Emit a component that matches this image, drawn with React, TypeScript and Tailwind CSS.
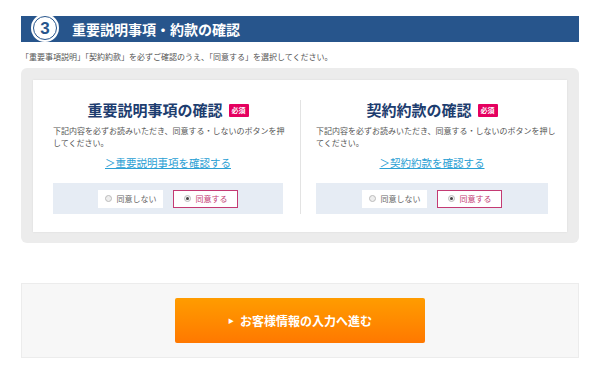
const agreeItems = [
  {
    id: "juyo",
    title: "重要説明事項の確認",
    link: "＞重要説明事項を確認する",
  },
  {
    id: "yakkan",
    title: "契約約款の確認",
    link: "＞契約約款を確認する",
  },
];

function AgreePanel({ title, link, first }: { title: string; link: string; first: boolean }) {
  return (
    <div className={first ? "pl-[20px] pr-[17px]" : "border-l border-[#e3e3e3] pl-[15px] pr-[19px]"}>
      <div className="flex items-center justify-center gap-[6px]">
        <h3 className="text-[15px] font-bold leading-[20px] text-[#1d3d6f]">{title}</h3>
        <span className="flex h-[13px] items-center rounded-[1px] bg-[#e5005f] px-[3px] text-[7px] font-bold leading-none text-white">
          必須
        </span>
      </div>
      <p className="mr-[-8px] mt-[5px] text-[8px] leading-[12px] text-[#555]">
        下記内容を必ずお読みいただき、同意する・しないのボタンを押してください。
      </p>
      <div className="mt-[7px] text-center text-[10.5px] leading-[14px]">
        <a className="text-[#2aa0d4] underline">{link}</a>
      </div>
      <div className="mt-[13px] flex h-[31px] items-center justify-center gap-[10px] bg-[#e6ecf4] text-[8px] leading-none">
        <div className="flex h-[18px] w-[65px] items-center justify-center gap-[5px] bg-white text-[#666]">
          <span className="h-[7px] w-[7px] rounded-full border border-[#bbb] bg-[#eee]" />
          同意しない
        </div>
        <div className="flex h-[18px] w-[65px] items-center justify-center gap-[5px] border border-[#c43a73] bg-white text-[#c43a73]">
          <span className="flex h-[7px] w-[7px] items-center justify-center rounded-full border border-[#bbb] bg-[#f3f3f3]">
            <span className="h-[3px] w-[3px] rounded-full bg-[#444]" />
          </span>
          同意する
        </div>
      </div>
    </div>
  );
}

export default function App() {
  return (
    <div
      className="h-[380px] w-[600px] bg-white px-[21px] pt-[16px]"
      style={{ fontFamily: '"Noto Sans CJK JP", "Noto Sans", sans-serif' }}
    >
      <div className="flex h-[26px] items-center bg-[#27558c] pl-[10px]">
        <div className="h-[28px] w-[28px] -translate-y-[1px] rounded-full bg-white p-[2px]">
          <div
            className="flex h-full w-full items-center justify-center rounded-full border border-[#27558c] text-[17px] font-bold leading-none text-[#27558c]"
            style={{ fontFamily: '"Liberation Sans", sans-serif' }}
          >
            3
          </div>
        </div>
        <h2 className="ml-[13px] text-[14px] font-bold text-white">重要説明事項・約款の確認</h2>
      </div>

      <p className="mt-[9px] text-[8px] leading-[12px] text-[#555]">
        「重要事項説明」「契約約款」を必ずご確認のうえ、「同意する」を選択してください。
      </p>

      <div className="mt-[5px] rounded-[6px] bg-[#ececec] px-[12px] pb-[11px] pt-[12px]">
        <div className="grid grid-cols-2 bg-white pb-[18px] pt-[20px] shadow-[0_0_2px_rgba(0,0,0,0.08)]">
          {agreeItems.map((item, i) => (
            <AgreePanel key={item.id} title={item.title} link={item.link} first={i === 0} />
          ))}
        </div>
      </div>

      <div className="mt-[40px] flex h-[75px] items-center justify-center border border-[#ececec] bg-[#f7f7f7]">
        <button className="flex h-[45px] w-[250px] items-center justify-center gap-[6px] rounded-[2px] bg-gradient-to-b from-[#ff9c00] to-[#ff7800] text-[12px] font-bold text-white">
          <span className="text-[6px]">▶</span>
          お客様情報の入力へ進む
        </button>
      </div>
    </div>
  );
}
